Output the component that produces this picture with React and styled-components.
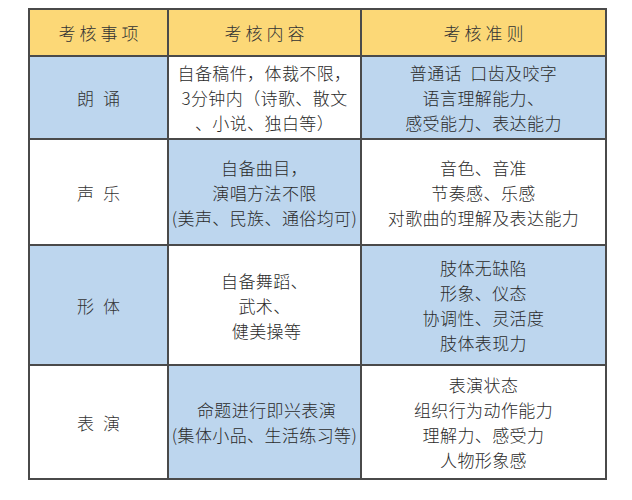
import React from 'react';
import styled, { createGlobalStyle } from 'styled-components';

const Global = createGlobalStyle`
  body {
    margin: 0;
    background: #fff;
    font-family: "Noto Sans CJK SC", "Noto Sans", sans-serif;
  }
`;

const Page = styled.div`
  padding: 8px 0 0 28px;
`;

const Table = styled.div`
  width: 579px;
  display: grid;
  grid-template-columns: 137px 191px 1fr;
  grid-template-rows: 45px 81px 104px 118px 112px;
  gap: 2px;
  background: #4a4a4a;
  border: 2px solid #4a4a4a;
  box-sizing: border-box;
`;

const Cell = styled.div`
  display: flex;
  flex-direction: column;
  align-items: center;
  justify-content: center;
  text-align: center;
  background: ${(p) => (p.$head ? '#fcd877' : p.$blue ? '#bdd6ee' : '#fff')};
  color: #2b2b2b;
  font-size: 17px;
  font-weight: 300;
  line-height: 25px;
  letter-spacing: 0.4px;
  white-space: pre;
`;

const HeadText = styled.span`
  font-size: 17px;
  letter-spacing: 4px;
  padding-left: 4px;
  color: #333;
`;

const Item = styled.span`
  letter-spacing: 9px;
  padding-left: 9px;
  color: #333;
`;

const rows = [
  {
    item: '朗诵',
    content: ['自备稿件，体裁不限，', '3分钟内（诗歌、散文', '、小说、独白等）'],
    rule: ['普通话  口齿及咬字', '语言理解能力、', '感受能力、表达能力'],
  },
  {
    item: '声乐',
    content: ['自备曲目，', '演唱方法不限', '(美声、民族、通俗均可)'],
    rule: ['音色、音准', '节奏感、乐感', '对歌曲的理解及表达能力'],
  },
  {
    item: '形体',
    content: ['自备舞蹈、', '武术、', ' 健美操等'],
    rule: ['肢体无缺陷', '形象、仪态', '协调性、灵活度', '肢体表现力'],
  },
  {
    item: '表演',
    content: [' 命题进行即兴表演', '(集体小品、生活练习等)'],
    rule: ['表演状态', '组织行为动作能力', '理解力、感受力', '人物形象感'],
  },
];

export default function App() {
  return (
    <Page>
      <Global />
      <Table>
        {['考核事项', '考核内容', '考核准则'].map((h) => (
          <Cell key={h} $head>
            <HeadText>{h}</HeadText>
          </Cell>
        ))}
        {rows.map((r, i) => (
          <React.Fragment key={r.item}>
            <Cell $blue={i % 2 === 0}>
              <Item>{r.item}</Item>
            </Cell>
            <Cell $blue={i % 2 === 1}>
              {r.content.map((l) => (
                <span key={l}>{l}</span>
              ))}
            </Cell>
            <Cell $blue={i % 2 === 0}>
              {r.rule.map((l) => (
                <span key={l}>{l}</span>
              ))}
            </Cell>
          </React.Fragment>
        ))}
      </Table>
    </Page>
  );
}
